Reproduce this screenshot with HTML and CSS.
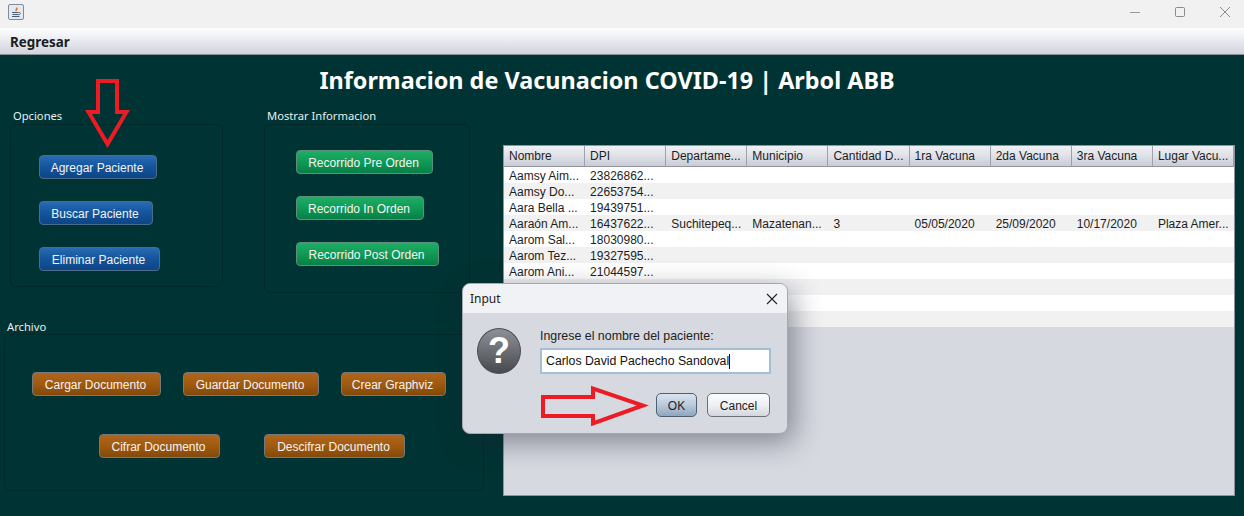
FILE: index.html
```html
<!DOCTYPE html>
<html lang="es">
<head>
<meta charset="utf-8">
<title>Arbol ABB</title>
<link rel="stylesheet" href="styles.css">
</head>
<body>
<div class="window">
  <header class="titlebar">
    <svg class="app-icon" width="16" height="16" viewBox="0 0 16 16">
      <rect x="0.5" y="0.5" width="15" height="15" rx="1.5" fill="#e4e9f0" stroke="#7f8b9b"/>
      <path d="M8.500 2.500c1 1.500-2 2.500-1 4.500 .3.600.8.900 1 1-1-1.300 1.800-2.300 1.300-3.500-.2-.8-.8-1.400-1.300-2z" fill="#e8711c"/>
      <path d="M4 8.500h6.500M4.500 10.500h5.500M4 12.500h7.500" stroke="#4a5a70" stroke-width="1"/>
      <path d="M10.500 8.500c2.500-.5 2.500 2-.5 2.500" fill="none" stroke="#4a6a8f" stroke-width="1"/>
    </svg>
    <div class="win-controls">
      <svg width="12" height="12" viewBox="0 0 12 12"><path d="M1 6.500h10" stroke="#9a9a9a"/></svg>
      <svg width="12" height="12" viewBox="0 0 12 12"><rect x="1.500" y="1.500" width="9" height="9" rx="1" fill="none" stroke="#8a8a8a"/></svg>
      <svg width="12" height="12" viewBox="0 0 12 12"><path d="M1 1l10 10M11 1L1 11" stroke="#8a8a8a"/></svg>
    </div>
  </header>
  <nav class="menubar"><span class="menu-item">Regresar</span></nav>
  <main class="content">
    <h1 class="title">Informacion de Vacunacion COVID-19 | Arbol ABB</h1>
    <div class="columns">
      <div class="left">
        <div class="top-groups">
          <section class="group group-options">
            <h2 class="group-label">Opciones</h2>
            <div class="panel panel-stack">
              <button class="btn btn-blue btn-add">Agregar Paciente</button>
              <button class="btn btn-blue btn-find">Buscar Paciente</button>
              <button class="btn btn-blue btn-del">Eliminar Paciente</button>
            </div>
          </section>
          <section class="group group-show">
            <h2 class="group-label">Mostrar Informacion</h2>
            <div class="panel panel-stack panel-show">
              <button class="btn btn-green btn-pre">Recorrido Pre Orden</button>
              <button class="btn btn-green btn-in">Recorrido In Orden</button>
              <button class="btn btn-green btn-post">Recorrido Post Orden</button>
            </div>
          </section>
        </div>
        <section class="group group-file">
          <h2 class="group-label">Archivo</h2>
          <div class="panel panel-file">
            <div class="file-row file-row-a">
              <button class="btn btn-brown btn-load">Cargar Documento</button>
              <button class="btn btn-brown btn-save">Guardar Documento</button>
              <button class="btn btn-brown btn-graph">Crear Graphviz</button>
            </div>
            <div class="file-row file-row-b">
              <button class="btn btn-brown btn-enc">Cifrar Documento</button>
              <button class="btn btn-brown btn-dec">Descifrar Documento</button>
            </div>
          </div>
        </section>
      </div>
      <div class="table-wrap">
        <table class="data">
          <thead>
            <tr><th>Nombre</th><th>DPI</th><th>Departame...</th><th>Municipio</th><th>Cantidad D...</th><th>1ra Vacuna</th><th>2da Vacuna</th><th>3ra Vacuna</th><th>Lugar Vacu...</th></tr>
          </thead>
          <tbody>
            <tr><td>Aamsy Aim...</td><td>23826862...</td><td></td><td></td><td></td><td></td><td></td><td></td><td></td></tr>
            <tr><td>Aamsy Do...</td><td>22653754...</td><td></td><td></td><td></td><td></td><td></td><td></td><td></td></tr>
            <tr><td>Aara Bella ...</td><td>19439751...</td><td></td><td></td><td></td><td></td><td></td><td></td><td></td></tr>
            <tr><td>Aaraón Am...</td><td>16437622...</td><td>Suchitepeq...</td><td>Mazatenan...</td><td>3</td><td>05/05/2020</td><td>25/09/2020</td><td>10/17/2020</td><td>Plaza Amer...</td></tr>
            <tr><td>Aarom Sal...</td><td>18030980...</td><td></td><td></td><td></td><td></td><td></td><td></td><td></td></tr>
            <tr><td>Aarom Tez...</td><td>19327595...</td><td></td><td></td><td></td><td></td><td></td><td></td><td></td></tr>
            <tr><td>Aarom Ani...</td><td>21044597...</td><td></td><td></td><td></td><td></td><td></td><td></td><td></td></tr>
            <tr><td>&nbsp;</td><td></td><td></td><td></td><td></td><td></td><td></td><td></td><td></td></tr>
            <tr><td>&nbsp;</td><td></td><td></td><td></td><td></td><td></td><td></td><td></td><td></td></tr>
            <tr><td>&nbsp;</td><td></td><td></td><td></td><td></td><td></td><td></td><td></td><td></td></tr>
          </tbody>
        </table>
      </div>
    </div>
  </main>

  <div class="dialog">
    <div class="dialog-title">
      <span>Input</span>
      <svg width="12" height="12" viewBox="0 0 12 12"><path d="M1 1l10 10M11 1L1 11" stroke="#222" stroke-width="1.100"/></svg>
    </div>
    <div class="dialog-body">
      <div class="question"><span>?</span></div>
      <div class="dialog-main">
        <label class="prompt">Ingrese el nombre del paciente:</label>
        <div class="input"><span>Carlos David Pachecho Sandoval</span><i class="caret"></i></div>
        <div class="dialog-actions">
          <button class="dbtn dbtn-ok">OK</button>
          <button class="dbtn">Cancel</button>
        </div>
      </div>
    </div>
  </div>

  <svg class="mark mark-down" width="46" height="72" viewBox="0 0 46 72">
    <path d="M13 3H32V34H41.500L22.500 66L3.500 34H13Z" fill="none" stroke="#ed1c24" stroke-width="4"/>
  </svg>
  <svg class="mark mark-right" width="108" height="44" viewBox="0 0 108 44">
    <path d="M2 12H52V3.500L102 20.500L52 38.500V31H2Z" fill="none" stroke="#ed1c24" stroke-width="4"/>
  </svg>
</div>
</body>
</html>
```
FILE: styles.css
```css
* { box-sizing: border-box; }
html, body { margin: 0; height: 100%; overflow: hidden; }
body { font-family: "Liberation Sans", Arial, sans-serif; background: #003333; }

.window { position: relative; width: 1244px; height: 516px; display: flex; flex-direction: column; }

.titlebar { height: 28px; background: #f1f1f1; display: flex; align-items: center; justify-content: space-between; padding: 0 13px 4px 8px; }
.app-icon { display: block; }
.win-controls { display: flex; gap: 33px; align-items: center; }

.menubar { height: 27px; background: linear-gradient(#fbfcfe 0%, #f4f5f8 25%, #dcdee5 75%, #d2d4dc 100%); border-bottom: 1px solid #8d9097; display: flex; align-items: center; padding: 2px 10px 0; }
.menu-item { font: 700 13.400px "Noto Sans", sans-serif; color: #1c1c1c; }

.content { flex: 1; display: flex; flex-direction: column; min-height: 0; }
.title { margin: 7px 0 0; height: 36px; padding-right: 30px; text-align: center; font: 700 23.400px/36px "Noto Sans", sans-serif; color: #fff; flex: none; }

.columns { display: flex; flex: 1; min-height: 0; }
.left { width: 503px; display: flex; flex-direction: column; }
.top-groups { display: flex; margin-top: 9px; }

.group-label { margin: 0; height: 17px; font: 400 11.200px/17px "Noto Sans", sans-serif; color: #e6f0f0; padding-left: 3px; }
.group-file .group-label { line-height: 19px; }
.panel { border: 1px solid #002a2a; border-radius: 6px; }

.group-options { margin-left: 10px; width: 213px; }
.group-show { margin-left: 41px; width: 206px; }
.group-file { margin: 24px 0 0 4px; width: 480px; }

.panel-stack { display: flex; flex-direction: column; align-items: flex-start; gap: 22px; padding: 30px 28px 0; height: 163px; }
.panel-show { padding: 25px 31px 0; height: 169px; }
.panel-file { height: 157px; padding: 37px 27px 0; display: flex; flex-direction: column; gap: 38px; }

.file-row { display: flex; gap: 22px; }
.file-row-b { padding-left: 67px; gap: 44px; }

.btn { flex: none; height: 24px; padding: 2px 2px 0 0; border-radius: 4px; border: 1px solid #5f7078; font: 400 12px "Liberation Sans", sans-serif; color: #f4f4f4; white-space: nowrap; }
.btn-blue { background: linear-gradient(#2a6bb2 0%, #14569f 45%, #0e4585 100%); border-color: #4c6c8c; }
.btn-green { background: linear-gradient(#1fae66 0%, #0f9a55 50%, #078047 100%); border-color: #5c8f7c; }
.btn-brown { background: linear-gradient(#b0661c 0%, #a05a10 50%, #84490a 100%); border-color: #76797a; }

.btn-add { width: 118px; }
.btn-find { width: 114px; }
.btn-del { width: 121px; }
.btn-pre { width: 137px; }
.btn-in { width: 128px; }
.btn-post { width: 143px; }
.btn-load { width: 129px; }
.btn-save { width: 136px; }
.btn-graph { width: 105px; }
.btn-enc { width: 121px; }
.btn-dec { width: 141px; }

.table-wrap { width: 732px; height: 351px; margin-top: 47px; border: 1px solid #8f949f; background: #d6d9e0; overflow: hidden; }
.data { width: 100%; table-layout: fixed; border-collapse: separate; border-spacing: 0; font: 400 12px "Liberation Sans", sans-serif; color: #1d1d22; }
.data th { height: 21px; padding: 0 0 0 5px; text-align: left; font-weight: 400; background: linear-gradient(#f0f1f5 0%, #dfe1e7 50%, #c9ccd6 100%); border-right: 1px solid #9da1ad; border-bottom: 1px solid #8f949f; overflow: hidden; white-space: nowrap; }
.data td { height: 16px; padding: 2px 0 0 5px; line-height: 14px; background: #fff; white-space: nowrap; overflow: hidden; }
.data tbody tr:nth-child(even) td { background: #f1f1f2; }

.dialog { position: absolute; left: 462px; top: 283px; width: 326px; height: 151px; border: 1px solid #a5a8ad; border-radius: 8px; overflow: hidden; background: #d6d9e0; box-shadow: 6px 8px 28px rgba(30, 35, 50, .45); display: flex; flex-direction: column; }
.dialog-title { height: 29px; background: #f1f2f5; display: flex; align-items: center; justify-content: space-between; padding: 0 9px 0 7px; font: 400 12px "Noto Sans", sans-serif; color: #222; }
.dialog-body { flex: 1; display: flex; padding: 15px 16px 0 14px; }
.question { width: 46px; height: 46px; border-radius: 50%; border: 1px solid #4a4d52; background: linear-gradient(#8d9096 0%, #6a6d72 50%, #46494e 100%); display: flex; align-items: center; justify-content: center; color: #fff; font: 700 36px/46px "Liberation Sans", sans-serif; }
.dialog-main { margin-left: 18px; flex: 1; display: flex; flex-direction: column; padding-left: 1px; }
.prompt { font: 400 12.400px/14px "Liberation Sans", sans-serif; color: #222; padding-top: 1px; height: 20px; }
.input { width: 231px; height: 26px; border: 2px solid #a4bed8; background: #fff; padding: 0 4px; display: flex; align-items: center; font: 400 12.300px "Liberation Sans", sans-serif; color: #111; }
.caret { width: 1px; height: 15px; background: #111; display: block; }
.dialog-actions { margin-top: 19px; display: flex; justify-content: flex-end; gap: 10px; padding-right: 1px; }
.dbtn { height: 24px; width: 63px; padding: 1px 0 0; border-radius: 5px; border: 1px solid #6d7077; background: linear-gradient(#fbfcfd 0%, #eef0f3 50%, #d3d6dd 100%); font: 400 12px "Liberation Sans", sans-serif; color: #222; }
.dbtn-ok { width: 41px; background: linear-gradient(#dbe4ee 0%, #b9cadb 50%, #8fa6bf 100%); border-color: #4e5f72; }

.mark { position: absolute; display: block; }
.mark-down { left: 85px; top: 78px; }
.mark-right { left: 541px; top: 385px; }
```
